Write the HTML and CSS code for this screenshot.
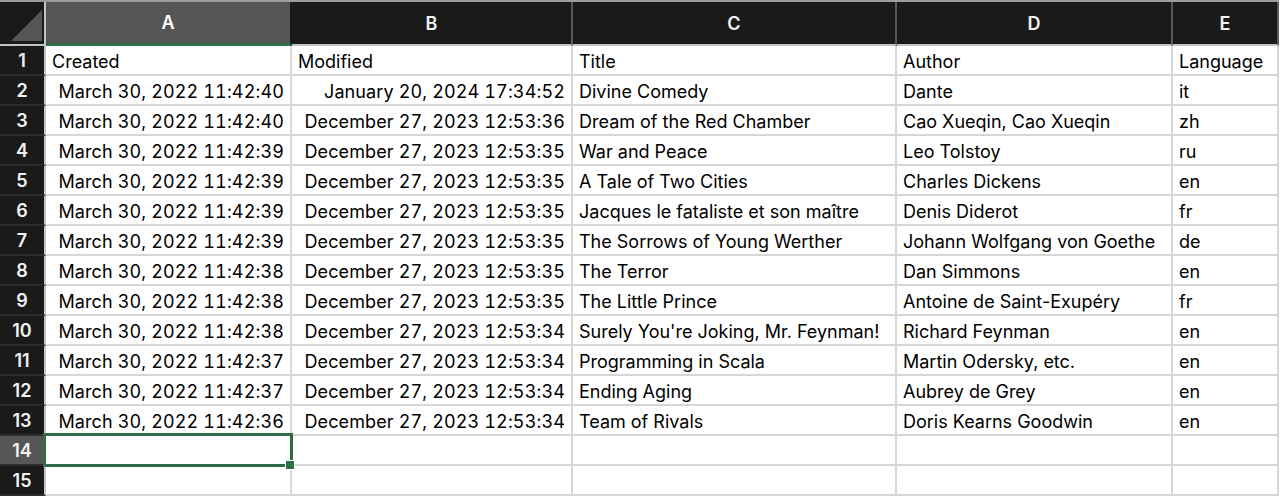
FILE: index.html
```html
<!DOCTYPE html>
<html lang="en">
<head>
<meta charset="utf-8">
<title>Books</title>
<link rel="stylesheet" href="styles.css">
</head>
<body>
<div class="sheet">
  <div class="corner"><svg class="corner-tri" width="31" height="31" viewBox="0 0 31 31"><polygon points="31,0 31,31 0,31" fill="#565656"/></svg></div>
  <div class="colhead selected">A</div>
  <div class="colhead">B</div>
  <div class="colhead">C</div>
  <div class="colhead">D</div>
  <div class="colhead">E</div>

  <div class="rowhead">1</div>
  <div class="cell">Created</div>
  <div class="cell">Modified</div>
  <div class="cell">Title</div>
  <div class="cell">Author</div>
  <div class="cell">Language</div>

  <div class="rowhead">2</div>
  <div class="cell num">March 30, 2022 11:42:40</div>
  <div class="cell num">January 20, 2024 17:34:52</div>
  <div class="cell">Divine Comedy</div>
  <div class="cell">Dante</div>
  <div class="cell">it</div>

  <div class="rowhead">3</div>
  <div class="cell num">March 30, 2022 11:42:40</div>
  <div class="cell num">December 27, 2023 12:53:36</div>
  <div class="cell">Dream of the Red Chamber</div>
  <div class="cell">Cao Xueqin, Cao Xueqin</div>
  <div class="cell">zh</div>

  <div class="rowhead">4</div>
  <div class="cell num">March 30, 2022 11:42:39</div>
  <div class="cell num">December 27, 2023 12:53:35</div>
  <div class="cell">War and Peace</div>
  <div class="cell">Leo Tolstoy</div>
  <div class="cell">ru</div>

  <div class="rowhead">5</div>
  <div class="cell num">March 30, 2022 11:42:39</div>
  <div class="cell num">December 27, 2023 12:53:35</div>
  <div class="cell">A Tale of Two Cities</div>
  <div class="cell">Charles Dickens</div>
  <div class="cell">en</div>

  <div class="rowhead">6</div>
  <div class="cell num">March 30, 2022 11:42:39</div>
  <div class="cell num">December 27, 2023 12:53:35</div>
  <div class="cell">Jacques le fataliste et son maître</div>
  <div class="cell">Denis Diderot</div>
  <div class="cell">fr</div>

  <div class="rowhead">7</div>
  <div class="cell num">March 30, 2022 11:42:39</div>
  <div class="cell num">December 27, 2023 12:53:35</div>
  <div class="cell">The Sorrows of Young Werther</div>
  <div class="cell">Johann Wolfgang von Goethe</div>
  <div class="cell">de</div>

  <div class="rowhead">8</div>
  <div class="cell num">March 30, 2022 11:42:38</div>
  <div class="cell num">December 27, 2023 12:53:35</div>
  <div class="cell">The Terror</div>
  <div class="cell">Dan Simmons</div>
  <div class="cell">en</div>

  <div class="rowhead">9</div>
  <div class="cell num">March 30, 2022 11:42:38</div>
  <div class="cell num">December 27, 2023 12:53:35</div>
  <div class="cell">The Little Prince</div>
  <div class="cell">Antoine de Saint-Exupéry</div>
  <div class="cell">fr</div>

  <div class="rowhead">10</div>
  <div class="cell num">March 30, 2022 11:42:38</div>
  <div class="cell num">December 27, 2023 12:53:34</div>
  <div class="cell">Surely You're Joking, Mr. Feynman!</div>
  <div class="cell">Richard Feynman</div>
  <div class="cell">en</div>

  <div class="rowhead">11</div>
  <div class="cell num">March 30, 2022 11:42:37</div>
  <div class="cell num">December 27, 2023 12:53:34</div>
  <div class="cell">Programming in Scala</div>
  <div class="cell">Martin Odersky, etc.</div>
  <div class="cell">en</div>

  <div class="rowhead">12</div>
  <div class="cell num">March 30, 2022 11:42:37</div>
  <div class="cell num">December 27, 2023 12:53:34</div>
  <div class="cell">Ending Aging</div>
  <div class="cell">Aubrey de Grey</div>
  <div class="cell">en</div>

  <div class="rowhead">13</div>
  <div class="cell num">March 30, 2022 11:42:36</div>
  <div class="cell num">December 27, 2023 12:53:34</div>
  <div class="cell">Team of Rivals</div>
  <div class="cell">Doris Kearns Goodwin</div>
  <div class="cell">en</div>

  <div class="rowhead selected">14</div>
  <div class="cell active"><div class="selection"></div><div class="handle"></div></div>
  <div class="cell"></div>
  <div class="cell"></div>
  <div class="cell"></div>
  <div class="cell"></div>

  <div class="rowhead">15</div>
  <div class="cell"></div>
  <div class="cell"></div>
  <div class="cell"></div>
  <div class="cell"></div>
  <div class="cell"></div>
</div>
</body>
</html>
```
FILE: styles.css
```css
* { box-sizing: border-box; }
html, body {
  margin: 0;
  padding: 0;
  background: #ffffff;
}
body {
  font-family: Inter, "Liberation Sans", Arial, sans-serif;
  font-size: 18px;
  color: #000;
  overflow: hidden;
}
.sheet {
  display: grid;
  grid-template-columns: 46px 246px 281px 324px 276px 106px;
  grid-template-rows: 44px repeat(15, 30px);
  border-top: 2px solid #9c9c9c;
  width: 1279px;
}
.corner {
  background: #1a1a1a;
  border-right: 2px solid #c4c4c4;
  border-bottom: 2px solid #c4c4c4;
  position: relative;
}
.corner-tri {
  position: absolute;
  left: 11px;
  top: 8px;
}
.colhead {
  background: #1a1a1a;
  color: #f2f2f2;
  font-weight: 600;
  font-size: 18px;
  display: flex;
  align-items: center;
  justify-content: center;
  border-right: 2px solid #595959;
  border-bottom: 2px solid #c4c4c4;
}
.colhead.selected {
  background: #565656;
  color: #ffffff;
  border-right-color: #1a1a1a;
  border-bottom: 3px solid #2f6e45;
}
.rowhead {
  background: #1a1a1a;
  color: #f2f2f2;
  font-weight: 600;
  font-size: 18px;
  display: flex;
  align-items: center;
  justify-content: center;
  border-right: 2px solid #c4c4c4;
  border-bottom: 2px solid #2e2e2e;
}
.rowhead.selected {
  background: #565656;
}
.cell {
  border-right: 2px solid #d6d6d6;
  border-bottom: 2px solid #d6d6d6;
  display: flex;
  align-items: center;
  padding: 2px 5px 0 6px;
  white-space: nowrap;
  overflow: hidden;
}
.cell.num {
  justify-content: flex-end;
  padding-right: 6px;
  font-variant-numeric: tabular-nums;
  letter-spacing: 0.12px;
}
.cell.active {
  position: relative;
  overflow: visible;
}
.selection {
  position: absolute;
  left: -3px;
  top: -3px;
  right: -3px;
  bottom: -3px;
  border: 3px solid #2f6e45;
  z-index: 2;
}
.handle {
  position: absolute;
  width: 10px;
  height: 10px;
  right: -5px;
  bottom: -6px;
  background: #2f6e45;
  border: 1px solid #ffffff;
  z-index: 3;
}
```
